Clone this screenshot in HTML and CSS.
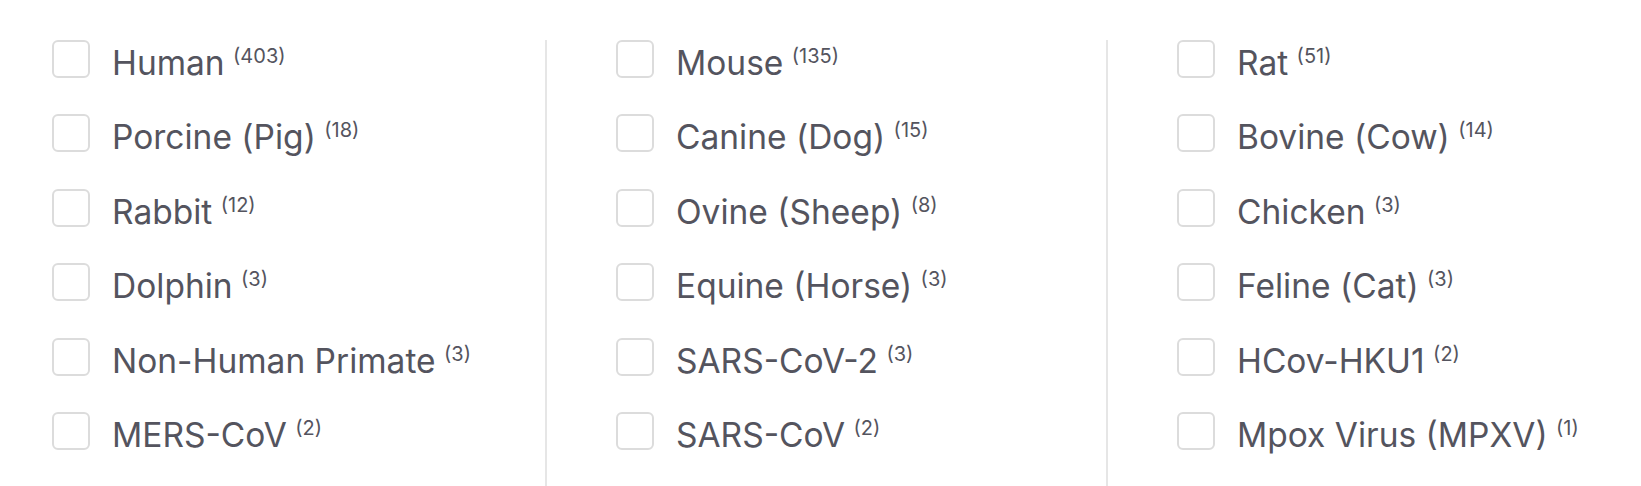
FILE: index.html
```html
<!DOCTYPE html>
<html lang="en">
<head>
    <meta charset="UTF-8">
    <meta name="viewport" content="width=device-width, initial-scale=1.0">
    <title>Species filter</title>
    <link rel="stylesheet" href="styles.css">
</head>
<body>
    <div class="filter">
        <div class="col">
            <label class="opt"><span class="box"></span><span class="name">Human <sup>(403)</sup></span></label>
            <label class="opt"><span class="box"></span><span class="name">Porcine (Pig) <sup>(18)</sup></span></label>
            <label class="opt"><span class="box"></span><span class="name">Rabbit <sup>(12)</sup></span></label>
            <label class="opt"><span class="box"></span><span class="name">Dolphin <sup>(3)</sup></span></label>
            <label class="opt"><span class="box"></span><span class="name">Non-Human Primate <sup>(3)</sup></span></label>
            <label class="opt"><span class="box"></span><span class="name">MERS-CoV <sup>(2)</sup></span></label>
        </div>
        <div class="col">
            <label class="opt"><span class="box"></span><span class="name">Mouse <sup>(135)</sup></span></label>
            <label class="opt"><span class="box"></span><span class="name">Canine (Dog) <sup>(15)</sup></span></label>
            <label class="opt"><span class="box"></span><span class="name">Ovine (Sheep) <sup>(8)</sup></span></label>
            <label class="opt"><span class="box"></span><span class="name">Equine (Horse) <sup>(3)</sup></span></label>
            <label class="opt"><span class="box"></span><span class="name">SARS-CoV-2 <sup>(3)</sup></span></label>
            <label class="opt"><span class="box"></span><span class="name">SARS-CoV <sup>(2)</sup></span></label>
        </div>
        <div class="col">
            <label class="opt"><span class="box"></span><span class="name">Rat <sup>(51)</sup></span></label>
            <label class="opt"><span class="box"></span><span class="name">Bovine (Cow) <sup>(14)</sup></span></label>
            <label class="opt"><span class="box"></span><span class="name">Chicken <sup>(3)</sup></span></label>
            <label class="opt"><span class="box"></span><span class="name">Feline (Cat) <sup>(3)</sup></span></label>
            <label class="opt"><span class="box"></span><span class="name">HCov-HKU1 <sup>(2)</sup></span></label>
            <label class="opt"><span class="box"></span><span class="name">Mpox Virus (MPXV) <sup>(1)</sup></span></label>
        </div>
    </div>
</body>
</html>
```

FILE: styles.css
```css
body{
    margin:0;
    background:#fff;
    font-family: Inter, "Noto Sans", sans-serif;
    color:#54545e;
    overflow:hidden;
}
.filter{
    display:grid;
    grid-template-columns: 493px 561px 1fr;
    padding:40px 0 0 52px;
}
.col{
    display:flex;
    flex-direction:column;
    padding-bottom:20px;
}
.col + .col{
    border-left:2px solid #e6e6e6;
    padding-left:69px;
}
.opt{
    display:flex;
    align-items:flex-start;
    gap:22px;
    height:74.4px;
    cursor:pointer;
}
.box{
    box-sizing:border-box;
    width:38px;
    height:38px;
    border:2px solid #dcdcdc;
    border-radius:6px;
    flex-shrink:0;
}
.name{
    font-size:33.5px;
    line-height:38px;
    padding-top:4px;
    white-space:nowrap;
}
.name sup{
    font-size:20px;
    line-height:0;
    vertical-align:top;
    position:relative;
    top:12px;
    margin-left:-1px;
}
```
